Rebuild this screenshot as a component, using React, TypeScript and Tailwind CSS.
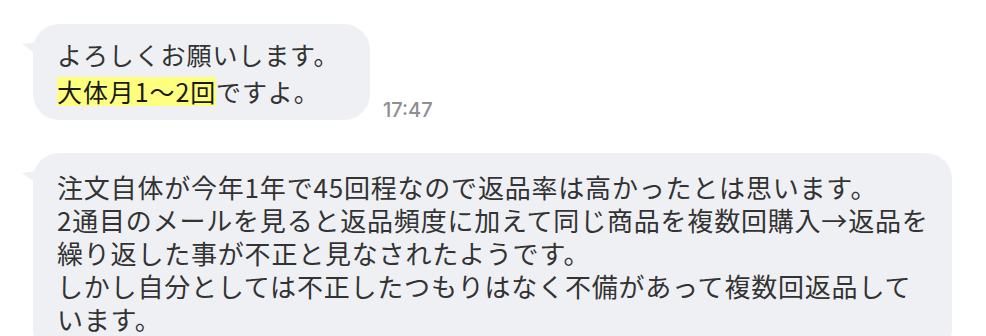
import React from 'react';

const font = { fontFamily: '"Noto Sans CJK JP", "Noto Sans", sans-serif' };

const Tail = () => (
  <svg className="absolute -left-[11px] top-[18px]" width="14" height="14" viewBox="0 0 14 14">
    <path d="M0 2 L14 0 L14 12 Z" fill="#eff0f3" />
  </svg>
);

export default function App() {
  return (
    <div className="w-[986px] h-[336px] overflow-hidden bg-white text-[#333333]" style={font}>
      <div className="pt-[24px] pl-[33px] flex items-end gap-[13px]">
        <div className="relative bg-[#eff0f3] rounded-[26px] pl-[24px] pr-[20px] pt-[12px] pb-[10px] w-[337px]">
          <Tail />
          <p className="text-[25px] leading-[37px] tracking-[0.9px] whitespace-nowrap">
            よろしくお願いします。
            <br />
            <span className="inline-block leading-[29px] bg-[#ffff7f] text-[#1a1a1a]">大体月1〜2回</span>ですよ。
          </p>
        </div>
        <span
          className="text-[20px] leading-[20px] text-[#8e8e93] font-medium"
          style={{ fontFamily: 'Inter, "Noto Sans", sans-serif' }}
        >
          17:47
        </span>
      </div>

      <div className="pt-[33px] pl-[33px]">
        <div className="relative bg-[#eff0f3] rounded-[26px] pl-[24px] pr-[24px] pt-[17px] pb-[20px] w-[919px]">
          <Tail />
          <p className="text-[26px] leading-[33px] tracking-[0.8px] whitespace-nowrap">
            注文自体が今年1年で45回程なので返品率は高かったとは思います。
            <br />
            2通目のメールを見ると返品頻度に加えて同じ商品を複数回購入→返品を
            <br />
            繰り返した事が不正と見なされたようです。
            <br />
            しかし自分としては不正したつもりはなく不備があって複数回返品して
            <br />
            います。
          </p>
        </div>
      </div>
    </div>
  );
}
